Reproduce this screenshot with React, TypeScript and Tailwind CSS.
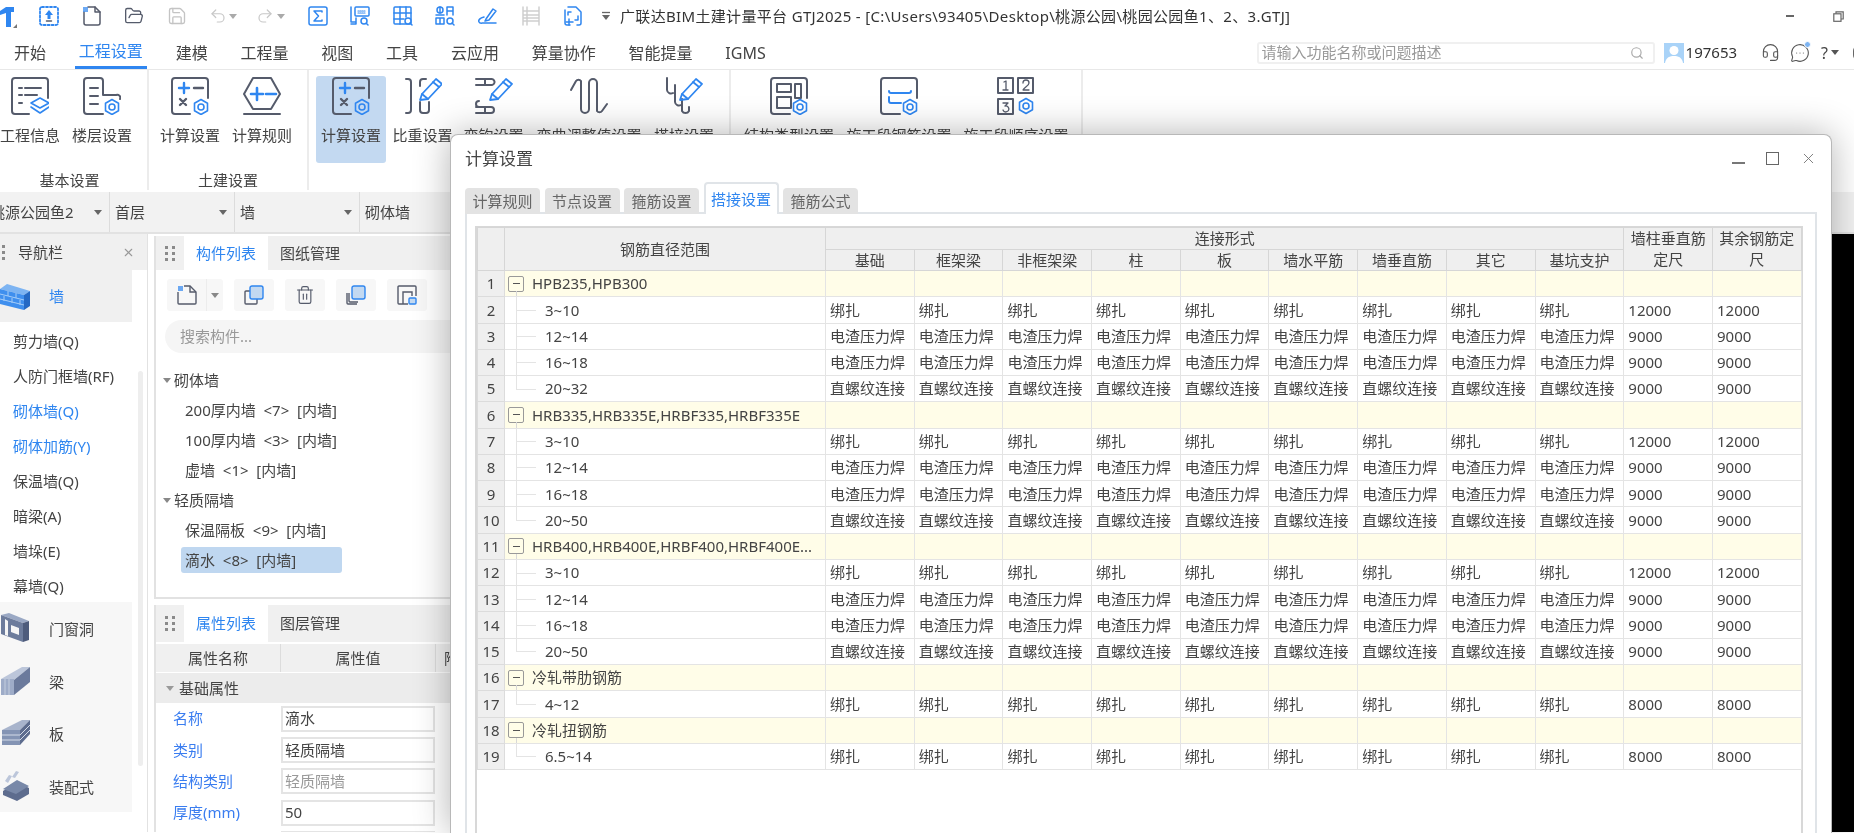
import React from "react";
import { FolderOpen, Save, Undo2, Redo2, Search, X, Trash2, Headset, MessageCircleMore } from "lucide-react";

const DARK = "#555b6b";
const BLUE = "#2f86f0";

function Caret({ color = "#666" }: { color?: string }) {
  return (
    <svg width="8" height="5" viewBox="0 0 8 5" className="shrink-0">
      <path d="M0 0h8L4 5z" fill={color} />
    </svg>
  );
}

function Gear({ x, y, r = 7 }: { x: number; y: number; r?: number }) {
  const pts = Array.from({ length: 6 }).map((_, i) => {
    const a = (Math.PI / 3) * i + Math.PI / 6;
    return `${x + r * Math.cos(a)},${y + r * Math.sin(a)}`;
  });
  return (
    <g fill="none" stroke={BLUE} strokeWidth="1.6" strokeLinejoin="round">
      <polygon points={pts.join(" ")} />
      <circle cx={x} cy={y} r={r * 0.4} />
    </g>
  );
}

function Ico({ children, size = 38 }: { children: React.ReactNode; size?: number }) {
  return (
    <svg width={size} height={size} viewBox="0 0 38 38" fill="none" stroke={DARK} strokeWidth="2" strokeLinecap="round" strokeLinejoin="round" className="shrink-0">
      {children}
    </svg>
  );
}

function InfoIcon() {
  return (
    <Ico>
      <path d="M18 37H4a3 3 0 0 1-3-3V4a3 3 0 0 1 3-3h30a3 3 0 0 1 3 3v17" />
      <path d="M8 11h3M14 11h16M8 18h3M14 18h12M8 26h3" />
      <path d="M29 21l9 5-9 5-9-5z" stroke={BLUE} strokeWidth="1.6" />
      <path d="M20 30l9 6 9-6" stroke={BLUE} strokeWidth="1.6" />
    </Ico>
  );
}

function FloorIcon() {
  return (
    <Ico>
      <path d="M20 37H4a3 3 0 0 1-3-3V4a3 3 0 0 1 3-3h13a3 3 0 0 1 3 3v14h13a3 3 0 0 1 4 4" />
      <path d="M7 11h8M7 19h8M7 27h8" />
      <Gear x={29} y={30} r={7.5} />
    </Ico>
  );
}

function CalcIcon() {
  return (
    <Ico>
      <path d="M19 37H4a3 3 0 0 1-3-3V4a3 3 0 0 1 3-3h30a3 3 0 0 1 3 3v17" />
      <path d="M8 11h10M13 6v10" stroke={BLUE} strokeWidth="2.4" />
      <path d="M23 11h9" strokeWidth="2.4" />
      <path d="M9 22l6 6M15 22l-6 6" strokeWidth="2.4" />
      <Gear x={30} y={30} r={7.5} />
    </Ico>
  );
}

function HexIcon() {
  return (
    <Ico>
      <path d="M10 1h18l9 16-9 15H10L1 17z" />
      <path d="M8 17h12M14 11v12M23 17h10" stroke={BLUE} strokeWidth="2.6" />
      <path d="M1 37h36" />
    </Ico>
  );
}

function Pencil({ x = 0, y = 0 }: { x?: number; y?: number }) {
  return (
    <g transform={`translate(${x} ${y})`} stroke={BLUE} strokeWidth="1.8" fill="none">
      <path d="M0 22l2-6L16 1l6 5L8 21z" />
      <path d="M2 16l6 5M13 4l6 5" />
    </g>
  );
}

function WeightIcon() {
  return (
    <Ico>
      <path d="M2 2h2a3 3 0 0 1 3 3v28a3 3 0 0 1-3 3H2" />
      <path d="M22 2h-3a3 3 0 0 0-3 3v4M16 25v8a3 3 0 0 0 3 3h3a3 3 0 0 0 3-3v-8" />
      <Pencil x={16} y={1} />
    </Ico>
  );
}

function HookIcon() {
  return (
    <Ico>
      <path d="M1 2h15a3 3 0 0 1 1 6H1M10 2v6M1 30h15a3 3 0 0 1 0 6H1M10 30v6M4 30a3 3 0 0 1 0-6" />
      <Pencil x={15} y={1} />
    </Ico>
  );
}

function BendIcon() {
  return (
    <Ico>
      <path d="M1 13l5-9a3 3 0 0 1 5 0v28a4 4 0 0 0 8 0V6a4 4 0 0 1 8 0v28a3 3 0 0 0 5 0l5-7" />
    </Ico>
  );
}

function LapIcon() {
  return (
    <Ico>
      <path d="M2 1v12a4 4 0 0 0 6 3M10 8v17a4 4 0 0 0 6 3M17 22v12a4 4 0 0 0 7 0v-4" />
      <Pencil x={15} y={1} />
    </Ico>
  );
}

function TypeIcon() {
  return (
    <Ico>
      <path d="M20 37H4a3 3 0 0 1-3-3V4a3 3 0 0 1 3-3h30a3 3 0 0 1 3 3v17" />
      <rect x="7" y="7" width="14" height="8" />
      <rect x="25" y="7" width="6" height="14" />
      <rect x="7" y="20" width="14" height="11" />
      <Gear x={30} y={30} r={7.5} />
    </Ico>
  );
}

function StageIcon() {
  return (
    <Ico>
      <path d="M20 37H4a3 3 0 0 1-3-3V4a3 3 0 0 1 3-3h30a3 3 0 0 1 3 3v17" />
      <path d="M9 14a2 2 0 0 0 2 2h18a2 2 0 0 0 2-2M9 20v4a2 2 0 0 0 2 2h10" stroke={BLUE} />
      <Gear x={30} y={30} r={7.5} />
    </Ico>
  );
}

function OrderIcon() {
  return (
    <Ico>
      <rect x="1" y="1" width="15" height="15" />
      <rect x="21" y="1" width="15" height="15" />
      <rect x="1" y="22" width="15" height="15" />
      <path d="M7 5l2-1v9M6 13h5M26 6a3 3 0 0 1 6 0c0 3-5 4-6 7h6M6 26h5l-3 3a3 3 0 1 1-2 4" strokeWidth="1.3" />
      <Gear x={29} y={29} r={7.5} />
    </Ico>
  );
}

// quick access icons, 20px
function Tb({ children, color = BLUE }: { children: React.ReactNode; color?: string }) {
  return (
    <svg width="20" height="20" viewBox="0 0 20 20" fill="none" stroke={color} strokeWidth="1.5" strokeLinecap="round" strokeLinejoin="round" className="shrink-0">
      {children}
    </svg>
  );
}

function QuickBar() {
  return (
    <div className="w-[618px] shrink-0 flex items-center">
      <svg width="16" height="22" viewBox="0 0 16 22" className="shrink-0 mt-[2px]">
        <path d="M0 5L6 1h8v5H11v15H6V7L0 9z" fill={BLUE} />
      </svg>
      <svg width="4" height="4" viewBox="0 0 4 4" className="mt-[20px] shrink-0 ml-[-3px]">
        <path d="M4 0v4H0z" fill="#777" />
      </svg>
      <div className="ml-[22px] flex items-center gap-[22.6px]">
        <Tb>
          <rect x="1" y="1" width="18" height="18" rx="2" strokeDasharray="2 2" strokeWidth="1.8" />
          <path d="M10 4l4 5h-2.5v4h-3V9H6z" fill={BLUE} stroke="none" />
          <path d="M7.5 15h5" stroke={DARK} />
        </Tb>
        <Tb color={DARK}>
          <path d="M6 1h7l5 5v11a2 2 0 0 1-2 2H4a2 2 0 0 1-2-2V6" />
          <path d="M13 1v5h5" />
          <path d="M1 1h5v5H1z" fill={BLUE} stroke="none" opacity="0.7" />
        </Tb>
        <FolderOpen size={20} color={DARK} strokeWidth={1.6} className="shrink-0" />
        <Save size={20} color="#c4c4c4" strokeWidth={1.6} className="shrink-0" />
        <div className="flex items-center gap-[2px]">
          <Undo2 size={18} color="#c8c8c8" strokeWidth={1.6} />
          <Caret color="#aaa" />
        </div>
        <div className="flex items-center gap-[3px] ml-[-4px]">
          <Redo2 size={18} color="#c8c8c8" strokeWidth={1.6} />
          <Caret color="#aaa" />
        </div>
        <Tb>
          <rect x="1" y="1" width="18" height="18" rx="2" />
          <path d="M14 6V5H6l4.500 5L6 15h8v-1" />
        </Tb>
        <Tb>
          <path d="M1 1v15h5M6 12v6H1" />
          <rect x="5" y="1" width="14" height="9" rx="1" />
          <path d="M8 5h8M8 7h8" strokeDasharray="1 1" strokeWidth="1.2" />
          <circle cx="14" cy="15" r="3" />
          <path d="M16.200 17.200L18 19" />
        </Tb>
        <Tb>
          <rect x="1" y="1" width="17" height="17" rx="1" />
          <path d="M1 7h17M1 13h10M7 1v17M13 1v10" />
          <circle cx="15" cy="15" r="3" fill="white" />
          <path d="M17 17l2 2" />
        </Tb>
        <Tb>
          <circle cx="5" cy="4" r="3" />
          <path d="M5 1v6M1 9h8M1 12h8v6H1zM5 12v6" />
          <path d="M12 9V1h6v8M12 5h6" />
          <circle cx="15" cy="15" r="3" />
          <path d="M17 17l2 2" />
        </Tb>
        <Tb>
          <path d="M8 13L15 3l3 2-7 9-4 1z" />
          <path d="M6 11c-4 1-6 3-5 5s3 1 4 1h13" />
        </Tb>
        <Tb color="#cfcfcf">
          <path d="M2 1v18M18 1v18M2 5h16M2 15h16M2 9h16M2 12h16M6 1v18" />
        </Tb>
        <Tb>
          <path d="M5 1h8l5 5v11a2 2 0 0 1-2 2h-2M7 19H4a2 2 0 0 1-2-2V4" />
          <path d="M5 9V6h3M15 10v4h-3M3 16h7M6 13v6" />
        </Tb>
      </div>
      <svg width="10" height="10" viewBox="0 0 10 10" className="ml-[18px] shrink-0">
        <path d="M1 1.500h8" stroke="#666" strokeWidth="1.300" />
        <path d="M1 4h8L5 9z" fill="#666" />
      </svg>
    </div>
  );
}

function TitleBar() {
  return (
    <div className="h-[32px] flex items-center">
      <QuickBar />
      <span className="ml-[2px] text-[15px] tracking-[0.33px] whitespace-nowrap text-[#333]">广联达BIM土建计量平台 GTJ2025 - [C:\Users\93405\Desktop\桃源公园\桃园公园鱼1、2、3.GTJ]</span>
      <div className="ml-auto flex items-center gap-[39px] pr-[10px]">
        <span className="w-[8px] h-[2px] bg-[#666]" />
        <svg width="11" height="11" viewBox="0 0 11 11" fill="none" stroke="#666" strokeWidth="1.200">
          <path d="M3 2.500V.8h7.200V8H8" />
          <rect x="0.800" y="2.800" width="7.200" height="7.500" />
        </svg>
      </div>
    </div>
  );
}

const menus = ["开始", "工程设置", "建模", "工程量", "视图", "工具", "云应用", "算量协作", "智能提量", "IGMS"];

function MenuBar() {
  return (
    <div className="h-[32px] mt-[6px] flex border-b border-[#e8e8e8] pl-[14px] gap-[32.800px] relative">
      {menus.map((m) =>
        m === "工程设置" ? (
          <div key={m} className="h-[31px] pb-[2px] -mx-[4px] px-[4px] flex items-center text-[16px] text-[#2f86f0] border-b-[3px] border-[#2f86f0]">
            {m}
          </div>
        ) : (
          <div key={m} className="h-[31px] pb-[2px] flex items-center text-[16px] text-[#444]">
            {m}
          </div>
        )
      )}
      <div className="ml-auto flex items-center pb-[2px]">
        <div className="w-[398px] h-[22px] bg-white border-2 border-[#f0f0f0] rounded-[3px] flex items-center px-[3px] text-[15px] text-[#999]">
          请输入功能名称或问题描述
          <Search size={14} color="#aaa" className="ml-auto mr-[6px]" />
        </div>
        <svg width="20" height="20" viewBox="0 0 20 20" className="ml-[9px] shrink-0">
          <rect width="20" height="20" fill="#a9d3f8" />
          <circle cx="10" cy="7.500" r="4.500" fill="white" />
          <path d="M1 20c1-6 5-7 9-7s8 1 9 7z" fill="white" />
        </svg>
        <span className="ml-[2px] text-[15px] text-[#333]">197653</span>
        <Headset size={19} color="#555" strokeWidth={1.4} className="ml-[24px]" />
        <div className="relative ml-[10px]">
          <MessageCircleMore size={20} color="#555" strokeWidth={1.3} />
          <span className="absolute -top-[2px] -right-[1px] w-[7px] h-[7px] rounded-full bg-[#7db4f2] border border-white" />
        </div>
        <span className="ml-[11px] text-[16px] text-[#444]">?</span>
        <span className="ml-[3px]">
          <Caret color="#555" />
        </span>
        <span className="w-[12px] h-[16px] border-2 border-[#666] rounded-full ml-[14px] mr-[-11px]" />
      </div>
    </div>
  );
}

function RibbonBtn({ label, icon, width, active }: { label: string; icon: React.ReactNode; width: string; active?: boolean }) {
  return (
    <div className={`${width} h-[87px] mt-[6px] pt-[1px] flex flex-col items-center shrink-0 rounded-[3px] ${active ? "bg-[#c3d9f1]" : ""}`}>
      {icon}
      <span className="mt-[10px] text-[15px] leading-[20px] whitespace-nowrap text-[#444]">{label}</span>
    </div>
  );
}

function Ribbon() {
  return (
    <div className="h-[123px] flex border-b border-[#dcdcdc] overflow-hidden">
      <div className="w-[149px] h-[120px] border-r-2 border-[#ececec] flex flex-col shrink-0">
        <div className="flex h-[100px]">
          <RibbonBtn width="w-[60px]" label="工程信息" icon={<InfoIcon />} />
          <span className="w-[6px]" />
          <RibbonBtn width="w-[72px]" label="楼层设置" icon={<FloorIcon />} />
        </div>
        <div className="text-[15px] leading-[20px] text-center pr-[8px] text-[#444]">基本设置</div>
      </div>
      <div className="w-[160px] h-[120px] border-r-2 border-[#ececec] flex flex-col shrink-0">
        <div className="flex h-[100px] pl-[5px]">
          <RibbonBtn width="w-[72px]" label="计算设置" icon={<CalcIcon />} />
          <RibbonBtn width="w-[72px]" label="计算规则" icon={<HexIcon />} />
        </div>
        <div className="text-[15px] leading-[20px] text-center text-[#444]">土建设置</div>
      </div>
      <div className="w-[422px] h-[120px] border-r-2 border-[#ececec] flex pl-[7px] shrink-0">
        <RibbonBtn active width="w-[70px]" label="计算设置" icon={<CalcIcon />} />
        <RibbonBtn width="w-[73px]" label="比重设置" icon={<WeightIcon />} />
        <RibbonBtn width="w-[69px]" label="弯钩设置" icon={<HookIcon />} />
        <RibbonBtn width="w-[122px]" label="弯曲调整值设置" icon={<BendIcon />} />
        <RibbonBtn width="w-[68px]" label="搭接设置" icon={<LapIcon />} />
      </div>
      <div className="w-[352px] h-[120px] border-r-2 border-[#ececec] flex shrink-0">
        <RibbonBtn width="w-[116px]" label="结构类型设置" icon={<TypeIcon />} />
        <RibbonBtn width="w-[104px]" label="施工段钢筋设置" icon={<StageIcon />} />
        <RibbonBtn width="w-[130px]" label="施工段顺序设置" icon={<OrderIcon />} />
      </div>
    </div>
  );
}

function SelectorBar() {
  return (
    <div className="h-[42px] mt-[-1px] flex bg-[#f2f2f2] border-b-2 border-[#e2e2e2] text-[15px] text-[#444]">
      <div className="w-[110px] border-r border-[#dcdcdc] flex items-center overflow-hidden pr-[7px] shrink-0">
        <span className="ml-[-10px] whitespace-nowrap">桃源公园鱼2</span>
        <span className="ml-auto"><Caret /></span>
      </div>
      <div className="w-[125px] border-r border-[#dcdcdc] flex items-center px-[5px] pr-[7px] shrink-0">
        首层
        <span className="ml-auto"><Caret /></span>
      </div>
      <div className="w-[125px] border-r border-[#dcdcdc] flex items-center px-[5px] pr-[7px] shrink-0">
        墙
        <span className="ml-auto"><Caret /></span>
      </div>
      <div className="flex-1 flex items-center px-[5px]">砌体墙</div>
    </div>
  );
}

function Grip({ cols = 2 }: { cols?: number }) {
  return (
    <div className={`grid ${cols === 2 ? "grid-cols-2" : "grid-cols-1"} gap-x-[4px] gap-y-[3px]`}>
      {Array.from({ length: cols * 3 }).map((_, i) => (
        <span key={i} className="w-[3px] h-[3px] bg-[#8a8a8a]" />
      ))}
    </div>
  );
}

function WallIcon() {
  return (
    <svg width="30" height="30" viewBox="0 0 30 30" className="shrink-0">
      <path d="M0 8l7-5 23 7-6 4z" fill="#7db4f2" />
      <path d="M0 8l24 6v15L0 23z" fill="#3f8fee" />
      <path d="M24 14l6-4v15l-6 4z" fill="#2569c4" />
      <path d="M0 13l24 6M0 18l24 6M8 10v5M16 12v5M4 15v5M12 17v5M20 19v5" stroke="#a6cdf7" strokeWidth="1" fill="none" />
    </svg>
  );
}

function DoorIcon() {
  return (
    <svg width="30" height="30" viewBox="0 0 30 30" className="shrink-0">
      <path d="M1 2l8-2 20 8-6 2z" fill="#9aa8c4" />
      <path d="M1 2l22 8v19L1 21z" fill="#6d7c9c" />
      <path d="M5 6l0 16 3 1V8z M11 12l8 3v7l-8-3z" fill="#f6f6f6" />
      <path d="M23 10l6-2v19l-6 2z" fill="#4e5c7c" />
    </svg>
  );
}

function BeamIcon() {
  return (
    <svg width="30" height="30" viewBox="0 0 30 30" className="shrink-0">
      <path d="M1 13L22 1h8L14 14z" fill="#bcc6da" />
      <path d="M1 13h13v16H1z" fill="#9eacc8" />
      <path d="M14 14L30 1v15L14 29z" fill="#6b7a9c" />
      <path d="M5 13v16M9 13v16" stroke="#c4cede" strokeWidth="1" />
    </svg>
  );
}

function SlabIcon() {
  return (
    <svg width="30" height="28" viewBox="0 0 30 28" className="shrink-0">
      <path d="M2 11L22 1h8L20 11z" fill="#a8b4cc" />
      <path d="M2 11h18v15H2z" fill="#8494b4" />
      <path d="M20 11L30 1v14L20 26z" fill="#5d6c8e" />
      <path d="M2 16h18M2 21h18M20 16l10-10M20 21l10-10" stroke="#d4dbe8" strokeWidth="1" />
    </svg>
  );
}

function PrefabIcon() {
  return (
    <svg width="30" height="30" viewBox="0 0 30 30" className="shrink-0">
      <path d="M3 20l14-9 12 6v6l-12 7-14-6z" fill="#5d6c8e" />
      <path d="M3 18l14-9 12 6-13 8z" fill="#7888a8" />
      <path d="M5 10l4-6 3 1-4 7zM12 6l4-6 3 1-4 6z" fill="#bcc6da" />
    </svg>
  );
}

const navItems = [
  { t: "剪力墙(Q)", c: "text-[#444]" },
  { t: "人防门框墙(RF)", c: "text-[#444]" },
  { t: "砌体墙(Q)", c: "text-[#2f86f0]" },
  { t: "砌体加筋(Y)", c: "text-[#2f86f0]" },
  { t: "保温墙(Q)", c: "text-[#444]" },
  { t: "暗梁(A)", c: "text-[#444]" },
  { t: "墙垛(E)", c: "text-[#444]" },
  { t: "幕墙(Q)", c: "text-[#444]" },
];

const navGroups = [
  { t: "门窗洞", i: <DoorIcon /> },
  { t: "梁", i: <BeamIcon /> },
  { t: "板", i: <SlabIcon /> },
  { t: "装配式", i: <PrefabIcon /> },
];

function NavBar() {
  return (
    <div className="w-[148px] shrink-0 border-r border-[#e2e2e2] relative overflow-hidden text-[15px] text-[#444]">
      <div className="h-[36px] bg-[#f0f0f0] flex items-center">
        <div className="ml-[-5px]"><Grip /></div>
        <span className="ml-[13px]">导航栏</span>
        <X size={13} color="#999" className="ml-auto mr-[12px]" />
      </div>
      <div className="w-[132px] h-[52px] bg-[#f0f0f0] flex items-center">
        <WallIcon />
        <span className="ml-[19px] text-[#2f86f0]">墙</span>
      </div>
      {navItems.map((n) => (
        <div key={n.t} className={`h-[35px] flex items-center pl-[13px] pt-[4px] whitespace-nowrap ${n.c}`}>
          {n.t}
        </div>
      ))}
      <div className="w-[132px] bg-[#f7f7f7]">
        {navGroups.map((g) => (
          <div key={g.t} className="h-[52.500px] flex items-center">
            <span className="w-[30px] flex justify-center">{g.i}</span>
            <span className="ml-[19px] pt-[2px]">{g.t}</span>
          </div>
        ))}
      </div>
      <span className="absolute left-[138px] top-[137px] w-[5px] h-[395px] bg-[#eeeeee] rounded-full" />
    </div>
  );
}

function ToolBtn({ children }: { children: React.ReactNode }) {
  return <div className="w-[40px] h-[32px] bg-[#f7f7f7] rounded-[3px] flex items-center justify-center">{children}</div>;
}

function CopyIcon({ stacked }: { stacked?: boolean }) {
  return (
    <svg width="20" height="20" viewBox="0 0 20 20" fill="none" stroke={DARK} strokeWidth="1.400">
      {stacked && <path d="M1 8v10a1 1 0 0 0 1 1h9" />}
      <path d={stacked ? "M3 8v8a1 1 0 0 0 1 1h8" : "M7 6H2a1 1 0 0 0-1 1v11a1 1 0 0 0 1 1h10a1 1 0 0 0 1-1v-4"} />
      <rect x="6" y="1" width="13" height="13" rx="2" fill="#c3d9f1" stroke={BLUE} />
    </svg>
  );
}

function CompPanel() {
  const tree = ["200厚内墙  <7>  [内墙]", "100厚内墙  <3>  [内墙]", "虚墙  <1>  [内墙]"];
  return (
    <div className="h-[363px] mt-[2px] border-l-2 border-b-2 border-[#e2e2e2] bg-white">
      <div className="h-[34px] bg-[#f0f0f0] flex items-center text-[15px]">
        <div className="w-[28px] flex justify-center"><Grip /></div>
        <div className="w-[84px] h-full bg-white text-[#2f86f0] flex items-center justify-center">构件列表</div>
        <div className="w-[84px] h-full flex items-center justify-center">图纸管理</div>
      </div>
      <div className="mt-[9px] pl-[11px] flex gap-[11px]">
        <div className="w-[56px] h-[32px] bg-[#f7f7f7] rounded-[3px] flex items-center">
          <span className="w-[40px] flex justify-center border-r border-[#ececec] h-full items-center">
            <svg width="20" height="20" viewBox="0 0 20 20" fill="none" stroke={DARK} strokeWidth="1.400">
              <path d="M7 1h6l6 6v11a1 1 0 0 1-1 1H2a1 1 0 0 1-1-1V7" />
              <path d="M13 1v6h6" />
              <path d="M1 1h5v5H1z" fill={BLUE} stroke="none" opacity="0.7" />
            </svg>
          </span>
          <span className="ml-[4px]"><Caret color="#888" /></span>
        </div>
        <ToolBtn><CopyIcon /></ToolBtn>
        <ToolBtn><Trash2 size={20} color={DARK} strokeWidth={1.400} /></ToolBtn>
        <ToolBtn><CopyIcon stacked /></ToolBtn>
        <ToolBtn>
          <svg width="20" height="20" viewBox="0 0 20 20" fill="none" stroke={DARK} strokeWidth="1.400">
            <path d="M11 19H2a1 1 0 0 1-1-1V2a1 1 0 0 1 1-1h16a1 1 0 0 1 1 1v9" />
            <path d="M6 19V7h9v4" />
            <rect x="12" y="13" width="7" height="6" rx="1" fill="#c3d9f1" stroke={BLUE} />
          </svg>
        </ToolBtn>
      </div>
      <div className="mt-[9px] ml-[9px] h-[33px] rounded-full bg-[#f5f5f5] flex items-center pl-[15px] text-[15px] text-[#999]">搜索构件...</div>
      <div className="mt-[12px] text-[15px]">
        <div className="h-[30px] flex items-center pl-[7px] gap-[3px]"><Caret color="#888" />砌体墙</div>
        {tree.map((t) => (
          <div key={t} className="h-[30px] flex items-center pl-[29px] whitespace-pre">{t}</div>
        ))}
        <div className="h-[30px] flex items-center pl-[7px] gap-[3px]"><Caret color="#888" />轻质隔墙</div>
        <div className="h-[30px] flex items-center pl-[29px] whitespace-pre">{"保温隔板  <9>  [内墙]"}</div>
        <div className="h-[30px] flex items-center pl-[25px]">
          <span className="w-[161px] h-[26px] rounded-[3px] bg-[#bfd7f0] flex items-center pl-[4px] whitespace-pre">{"滴水  <8>  [内墙]"}</span>
        </div>
      </div>
    </div>
  );
}

function PropPanel() {
  const rows = [
    { k: "名称", v: "滴水", c: "text-[#444]" },
    { k: "类别", v: "轻质隔墙", c: "text-[#444]" },
    { k: "结构类别", v: "轻质隔墙", c: "text-[#999]" },
    { k: "厚度(mm)", v: "50", c: "text-[#444]" },
    { k: "", v: "", c: "" },
  ];
  return (
    <div className="mt-[6px] border-l-2 border-[#e2e2e2] text-[15px] bg-white h-[229px] overflow-hidden">
      <div className="h-[37px] bg-[#f0f0f0] flex items-center">
        <div className="w-[28px] flex justify-center"><Grip /></div>
        <div className="w-[84px] h-full bg-white text-[#2f86f0] flex items-center justify-center">属性列表</div>
        <div className="w-[84px] h-full flex items-center justify-center">图层管理</div>
      </div>
      <div className="mt-[2px] h-[29px] bg-[#f0f0f0] flex border-b border-white">
        <div className="w-[125px] border-r border-[#dcdcdc] flex items-center justify-center">属性名称</div>
        <div className="w-[155px] border-r border-[#dcdcdc] flex items-center justify-center">属性值</div>
        <div className="flex-1 pl-[8px] flex items-center">附加</div>
      </div>
      <div className="h-[30px] bg-[#ececec] flex items-center pl-[10px] gap-[5px]"><Caret color="#999" />基础属性</div>
      {rows.map((r, i) => (
        <div key={i} className="h-[31.300px] flex items-center pl-[17px]">
          <span className="w-[108px] text-[#3a7df0]">{r.k}</span>
          <span className={`w-[154px] h-[26px] border-2 border-[#e4e4e4] flex items-center pl-[2px] ${r.c}`}>{r.v}</span>
        </div>
      ))}
    </div>
  );
}

type Row = { group?: string; range?: string; kind?: string; a?: string; b?: string; last?: boolean };

const BIND = "绑扎";
const WELD = "电渣压力焊";
const THREAD = "直螺纹连接";

function bars(top: string): Row[] {
  return [
    { range: "3~10", kind: BIND, a: "12000", b: "12000" },
    { range: "12~14", kind: WELD, a: "9000", b: "9000" },
    { range: "16~18", kind: WELD, a: "9000", b: "9000" },
    { range: top, kind: THREAD, a: "9000", b: "9000", last: true },
  ];
}

const rows: Row[] = [
  { group: "HPB235,HPB300" },
  ...bars("20~32"),
  { group: "HRB335,HRB335E,HRBF335,HRBF335E" },
  ...bars("20~50"),
  { group: "HRB400,HRB400E,HRBF400,HRBF400E..." },
  ...bars("20~50"),
  { group: "冷轧带肋钢筋" },
  { range: "4~12", kind: BIND, a: "8000", b: "8000", last: true },
  { group: "冷轧扭钢筋" },
  { range: "6.5~14", kind: BIND, a: "8000", b: "8000", last: true },
];

const linkCols = ["基础", "框架梁", "非框架梁", "柱", "板", "墙水平筋", "墙垂直筋", "其它", "基坑支护"];

function SettingsTable() {
  return (
    <table className="table-fixed border-collapse w-[1324px] text-[15px] text-[#444]">
      <colgroup>
        <col className="w-[27px]" />
        <col className="w-[321px]" />
        {Array.from({ length: 11 }).map((_, i) => (
          <col key={i} className="w-[88.700px]" />
        ))}
      </colgroup>
      <thead>
        <tr className="h-[21px] bg-[#efefef]">
          <th rowSpan={2} className="border border-[#d6d6d6] font-normal" />
          <th rowSpan={2} className="border border-[#d6d6d6] font-normal">钢筋直径范围</th>
          <th colSpan={9} className="border border-[#d6d6d6] font-normal leading-[18px]">连接形式</th>
          <th rowSpan={2} className="border border-[#d6d6d6] font-normal leading-[21px] px-[4px]">墙柱垂直筋定尺</th>
          <th rowSpan={2} className="border border-[#d6d6d6] font-normal leading-[21px] px-[4px]">其余钢筋定尺</th>
        </tr>
        <tr className="h-[21px] bg-[#efefef]">
          {linkCols.map((c) => (
            <th key={c} className="border border-[#d6d6d6] font-normal leading-[18px]">{c}</th>
          ))}
        </tr>
      </thead>
      <tbody>
        {rows.map((r, i) => (
          <tr key={i} className={`h-[26.270px] ${r.group ? "bg-[#fffde8]" : "bg-white"}`}>
            <td className="border border-[#dcdcdc] bg-[#efefef] text-center">{i + 1}</td>
            {r.group ? (
              <td className="border border-[#e4e4e4] relative whitespace-nowrap overflow-hidden">
                <div className="flex items-center pl-[3px]">
                  <span className="w-[16px] h-[16px] border border-[#999] rounded-[2px] flex items-center justify-center shrink-0">
                    <span className="w-[7px] h-px bg-[#555]" />
                  </span>
                  <span className="ml-[8px]">{r.group}</span>
                </div>
                <span className="absolute left-[11px] top-[20px] bottom-0 w-px bg-[#d8d8d8]" />
              </td>
            ) : (
              <td className="border border-[#e4e4e4] relative pl-[40px]">
                {r.range}
                <span className={`absolute left-[11px] top-0 w-px bg-[#e4e4e4] ${r.last ? "h-1/2" : "h-full"}`} />
                <span className="absolute left-[11px] top-1/2 w-[20px] h-px bg-[#e4e4e4]" />
              </td>
            )}
            {linkCols.map((c) => (
              <td key={c} className="border border-[#e4e4e4] pl-[4px] whitespace-nowrap overflow-hidden">{r.kind}</td>
            ))}
            <td className="border border-[#e4e4e4] pl-[4px]">{r.a}</td>
            <td className="border border-[#e4e4e4] pl-[4px]">{r.b}</td>
          </tr>
        ))}
      </tbody>
    </table>
  );
}

const dlgTabs = ["计算规则", "节点设置", "箍筋设置", "搭接设置", "箍筋公式"];

function SettingsDialog() {
  return (
    <div className="absolute left-[450px] top-[134px] w-[1382px] h-[699px] bg-white border border-[#b8b8b8] border-b-0 rounded-t-[8px] shadow-[0_0_36px_rgba(0,0,0,0.3)] flex flex-col">
      <div className="h-[47px] flex items-center pl-[14px] text-[17px] text-[#444] shrink-0">
        计算设置
        <div className="ml-auto flex items-center gap-[21px] pr-[14px]">
          <span className="w-[13px] h-[1.500px] bg-[#777] mt-[9px]" />
          <span className="w-[13px] h-[13px] border-[1.500px] border-[#666]" />
          <X size={17} color="#777" strokeWidth={1.300} />
        </div>
      </div>
      <div className="flex items-end gap-[4.500px] pl-[14px] h-[32px] shrink-0 relative z-10 mb-[-2px]">
        {dlgTabs.map((t) =>
          t === "搭接设置" ? (
            <div key={t} className="w-[75px] h-[32px] bg-white border-2 border-b-0 border-[#e0e4e8] rounded-t-[4px] flex items-center justify-center text-[15px] text-[#2f86f0]">
              {t}
            </div>
          ) : (
            <div key={t} className="w-[75px] h-[26px] bg-[#e3e3e3] rounded-t-[4px] flex items-center justify-center text-[15px] text-[#666]">
              {t}
            </div>
          )
        )}
      </div>
      <div className="flex-1 mx-[14px] border-2 border-b-0 border-[#e0e4e8] pt-[12px] pl-[8px] overflow-hidden">
        <div className="w-[1328px] h-full border-x-2 border-t border-[#d8d8d8]">
          <SettingsTable />
        </div>
      </div>
    </div>
  );
}

export default function App() {
  return (
    <div className="relative w-[1854px] h-[833px] overflow-hidden bg-white font-['Noto_Sans','Noto_Sans_CJK_SC',sans-serif] text-[#444] blur-[0.4px]">
      <TitleBar />
      <MenuBar />
      <Ribbon />
      <SelectorBar />
      <div className="h-[598px] flex">
        <NavBar />
        <div className="w-[6px] shrink-0 bg-white" />
        <div className="w-[320px] shrink-0 overflow-hidden">
          <CompPanel />
          <PropPanel />
        </div>
        <div className="flex-1 bg-black" />
      </div>
      <SettingsDialog />
    </div>
  );
}
